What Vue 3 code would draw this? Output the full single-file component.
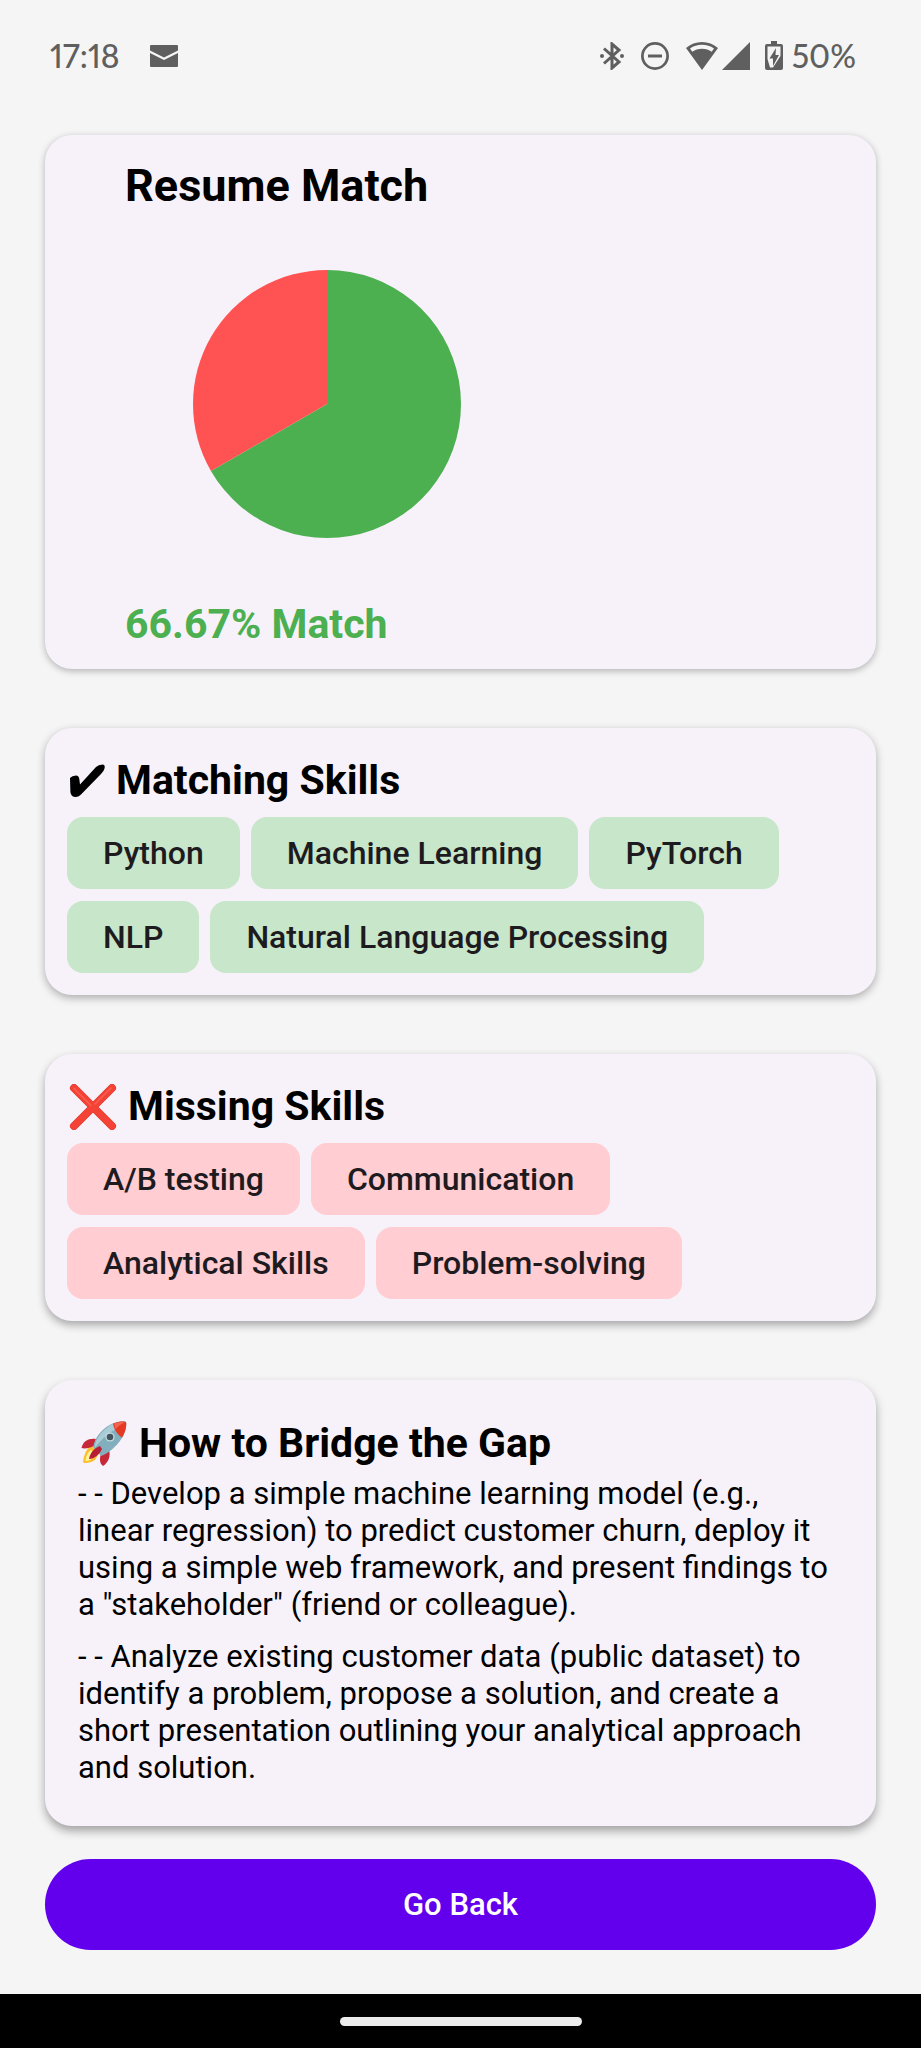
<script setup>
const matchPercent = 66.67

const radius = 134
const angle = (matchPercent / 100) * 2 * Math.PI
const endX = radius + radius * Math.sin(angle)
const endY = radius - radius * Math.cos(angle)
const matchSlice = `M${radius} ${radius}V0A${radius} ${radius} 0 1 1 ${endX} ${endY}Z`
const missingSlice = `M${radius} ${radius}L${endX} ${endY}A${radius} ${radius} 0 0 1 ${radius} 0Z`

const matchingSkills = ['Python', 'Machine Learning', 'PyTorch', 'NLP', 'Natural Language Processing']
const missingSkills = ['A/B testing', 'Communication', 'Analytical Skills', 'Problem-solving']
const suggestions = [
  '- - Develop a simple machine learning model (e.g., linear regression) to predict customer churn, deploy it using a simple web framework, and present findings to a "stakeholder" (friend or colleague).',
  '- - Analyze existing customer data (public dataset) to identify a problem, propose a solution, and create a short presentation outlining your analytical approach and solution.',
]
</script>

<template>
  <div class="screen">
    <header class="status">
      <div class="status-group">
        <span class="status-text">17:18</span>
        <svg class="mail" width="28" height="22" viewBox="0 0 28 22" role="img" aria-label="Mail">
          <path d="M1 0H27Q28 0 28 1V5.500L14 12.500L0 5.500V1Q0 0 1 0Z" />
          <path d="M0 8L14 15L28 8V21Q28 22 27 22H1Q0 22 0 21Z" />
        </svg>
      </div>
      <div class="status-group">
        <svg width="24" height="28" viewBox="0 0 24 28" role="img" aria-label="Bluetooth">
          <path d="M4 6.500L19 20L12 26V2L19 8L4 21.500" fill="none" stroke="currentColor" stroke-width="3" />
          <circle cx="2" cy="14" r="2" />
          <circle cx="22" cy="14" r="2" />
        </svg>
        <svg class="dnd" width="28" height="28" viewBox="0 0 28 28" role="img" aria-label="Do not disturb">
          <circle cx="14" cy="14" r="12.600" fill="none" stroke="currentColor" stroke-width="2.700" />
          <path d="M7 12.500H21V15.500H7Z" />
        </svg>
        <svg class="wifi" width="32" height="28" viewBox="0 0 32 28" role="img" aria-label="Wi-Fi">
          <path fill-rule="evenodd" d="M16 0C22 0 27.500 2.200 32 6L16 28L0 6C4.500 2.200 10 0 16 0ZM16 2.800C11.500 2.800 7.500 4 4 6.600L6.300 9.700C9 7.700 12.300 6.700 16 6.700S23 7.700 25.700 9.700L28 6.600C24.500 4 20.500 2.800 16 2.800Z" />
        </svg>
        <svg class="signal" width="28" height="28" viewBox="0 0 28 28" role="img" aria-label="Signal">
          <path d="M28 0V28H0Z" />
        </svg>
        <svg class="battery" width="18" height="30" viewBox="0 0 18 30" role="img" aria-label="Charging">
          <path fill-rule="evenodd" d="M6 0H12V3H16Q18 3 18 5V27Q18 29 16 29H2Q0 29 0 27V5Q0 3 2 3H6ZM2.500 5.500V18L5 26.500H8L15.500 15V5.500Z" />
          <path d="M11 7L4.500 17.500H8V25L14 14H10.500Z" />
        </svg>
        <span class="status-text level">50%</span>
      </div>
    </header>

    <main class="content">
      <section class="card summary">
        <h1>Resume Match</h1>
        <svg class="pie" width="268" height="268" viewBox="0 0 268 268" role="img" aria-label="Match chart">
          <path :d="matchSlice" fill="#4caf50" />
          <path :d="missingSlice" fill="#ff5252" />
        </svg>
        <p class="percent">{{ matchPercent }}% Match</p>
      </section>

      <section class="card skills">
        <h2>
          <svg width="38" height="36" viewBox="0 0 38 36" aria-hidden="true">
            <path d="M3 15Q5 12.500 9 12.500Q12 12.500 12.300 16L13 21.500L29 4Q31.500 1.500 35.500 1.500Q38.500 1.500 37.500 5.500Q37 8 34 11L14 31.500Q11.500 34 8.500 34Q4 34 3.400 29Z" fill="#000" />
          </svg>
          Matching Skills
        </h2>
        <ul class="chips">
          <li v-for="skill in matchingSkills" :key="skill" class="chip match">{{ skill }}</li>
        </ul>
      </section>

      <section class="card skills middle">
        <h2>
          <svg width="50" height="46" viewBox="0 0 50 46" aria-hidden="true">
            <g fill="none" stroke-linecap="round">
              <path d="M7 4L45 42M45 4L7 42" stroke="#d93a2f" stroke-width="8" />
              <path d="M7 4L45 42M45 4L7 42" stroke="#f44336" stroke-width="7" />
              <path d="M7 4.500L24 21.500M44 4L28 20" stroke="#fa5f50" stroke-width="1.600" />
            </g>
          </svg>
          Missing Skills
        </h2>
        <ul class="chips">
          <li v-for="skill in missingSkills" :key="skill" class="chip missing">{{ skill }}</li>
        </ul>
      </section>

      <section class="card advice">
        <h2>
          <svg width="50" height="46" viewBox="1 0 50 46" aria-hidden="true">
            <path d="M14 25C9 28 7 34 6 41C7 43 14 42 18 39L23 31Z" fill="#fbc02d" />
            <path d="M14 29C10 32 9 36 8.500 40C13 40 16 37 19 33Z" fill="#fff59d" />
            <path d="M19 18C12 17 6 20 4.500 27C8 28 13 27 17 25Z" fill="#c62839" />
            <path d="M32 29C34 35 31 42 26 45C23 43 22 38 24 33Z" fill="#c62839" />
            <path d="M16 26C18 16 26 6 37 2C43 0 48 0 49 1C50 5 48 12 45 17C39 26 32 32 24 35Z" fill="#82aebd" />
            <path d="M18 23C21 14 28 7 37 2L41 7C33 11 24 18 18 27Z" fill="#a9ccd6" />
            <path d="M36 2.500C41 0 48 0 49 1C50 5 48 12 45 16.500C41 14 37 9 36 2.500Z" fill="#e53922" />
            <path d="M37 2.500C41 1 46 .500 48 1.500C44 3 41 5 38.500 8Z" fill="#f2654f" />
            <path d="M23 25C17 27 13 32 12 38C17 38 23 33 25 28Z" fill="#b71f35" />
            <circle cx="33" cy="16" r="4.600" fill="#c4dce3" />
            <circle cx="33" cy="16" r="3.300" fill="#44545e" />
          </svg>
          How to Bridge the Gap
        </h2>
        <p v-for="text in suggestions" :key="text">{{ text }}</p>
      </section>

      <button type="button" class="back">Go Back</button>
    </main>

    <div class="navbar"><span class="handle"></span></div>
  </div>
</template>

<style>
body {
  margin: 0;
  background: #f5f5f5;
}
</style>

<style scoped>
.screen {
  display: flex;
  flex-direction: column;
  min-height: 100vh;
  background: #f5f5f5;
  color: #000;
  font-family: Roboto, "Liberation Sans", sans-serif;
}

h1,
h2,
p,
ul {
  margin: 0;
  padding: 0;
}

.status {
  display: flex;
  justify-content: space-between;
  align-items: center;
  height: 112px;
  padding: 0 65px 0 50px;
  color: #5f5f5f;
}

.status svg {
  fill: currentColor;
}

.status-group {
  display: flex;
  align-items: center;
}

.status-text {
  font-family: Lato, Roboto, sans-serif;
  font-size: 32px;
  line-height: 36px;
  font-weight: 500;
  font-variant-numeric: proportional-nums;
}

.mail {
  margin-left: 30px;
}

.dnd {
  margin-left: 17px;
}

.wifi {
  margin-left: 17px;
}

.signal {
  margin-left: 4px;
}

.battery {
  margin-left: 15px;
}

.level {
  margin-left: 9px;
}

.content {
  display: flex;
  flex-direction: column;
  padding: 23px 45px 43px;
}

.card {
  margin-bottom: 59px;
  border-radius: 27px;
  background: #f7f2fa;
  box-shadow: 0 2px 7px rgba(0, 0, 0, 0.28);
}

.summary {
  padding: 24px 80px 21px;
}

h1 {
  font-size: 45px;
  line-height: 53px;
  font-weight: 700;
}

.pie {
  display: block;
  margin: 58px 0 63px 68px;
}

.percent {
  color: #4caf50;
  font-size: 41px;
  line-height: 47px;
  font-weight: 700;
}

h2 {
  display: flex;
  align-items: center;
  gap: 11px;
  font-size: 41px;
  line-height: 47px;
  font-weight: 700;
}

.skills {
  padding: 29px 22px 22px;
  box-shadow: 0 3px 8px rgba(0, 0, 0, 0.3);
}

.middle {
  box-shadow: 0 4px 9px rgba(0, 0, 0, 0.32);
}

.chips {
  display: flex;
  flex-wrap: wrap;
  gap: 12px 11px;
  margin-top: 13px;
  list-style: none;
}

.chip {
  padding: 0 36px;
  border-radius: 16px;
  color: #1d1b20;
  font-size: 32px;
  line-height: 72px;
  font-weight: 500;
}

.match {
  background: #c8e6c9;
}

.missing {
  background: #ffcdd2;
}

.advice {
  margin-bottom: 33px;
  padding: 40px 38px 40px 33px;
  box-shadow: 0 5px 10px rgba(0, 0, 0, 0.34);
}

.advice p {
  margin-top: 8px;
  font-size: 31px;
  line-height: 37px;
}

.advice p + p {
  margin-top: 15px;
}

.back {
  height: 91px;
  border: 0;
  border-radius: 46px;
  background: #6200ee;
  color: #fff;
  font-family: inherit;
  font-size: 31px;
  font-weight: 500;
}

.navbar {
  display: flex;
  align-items: center;
  justify-content: center;
  height: 54px;
  margin-top: auto;
  background: #000;
}

.handle {
  width: 242px;
  height: 9px;
  border-radius: 5px;
  background: #ececec;
}
</style>
